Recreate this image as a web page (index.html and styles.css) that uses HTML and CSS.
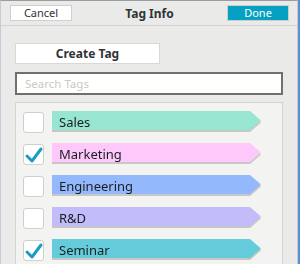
FILE: index.html
```html
<!DOCTYPE html>
<html>
<head>
    <meta charset="UTF-8">
    <title>Tag Info</title>
    <link rel="stylesheet" href="styles.css">
</head>
<body>
    <div class="window">
        <div class="header">
            <button class="header-button cancel">Cancel</button>
            <div class="title">Tag Info</div>
            <button class="header-button done">Done</button>
        </div>
        <div class="container">
            <button class="create-button">Create Tag</button>
            <input type="text" class="search-input" placeholder="Search Tags">
            <div class="tag-list">
                <div class="tag-row">
                    <span class="check-box"></span>
                    <span class="tag-wrap"><span class="tag tag-sales">Sales</span></span>
                </div>
                <div class="tag-row">
                    <span class="check-box checked">
                        <svg width="21" height="21" viewBox="0 0 21 21"><path d="M4 12 L9 17 L18 5" fill="none" stroke="#1b9dbf" stroke-width="3" stroke-linecap="round" stroke-linejoin="round"/></svg>
                    </span>
                    <span class="tag-wrap"><span class="tag tag-marketing">Marketing</span></span>
                </div>
                <div class="tag-row">
                    <span class="check-box"></span>
                    <span class="tag-wrap"><span class="tag tag-engineering">Engineering</span></span>
                </div>
                <div class="tag-row">
                    <span class="check-box"></span>
                    <span class="tag-wrap"><span class="tag tag-rnd">R&amp;D</span></span>
                </div>
                <div class="tag-row">
                    <span class="check-box checked">
                        <svg width="21" height="21" viewBox="0 0 21 21"><path d="M4 12 L9 17 L18 5" fill="none" stroke="#1b9dbf" stroke-width="3" stroke-linecap="round" stroke-linejoin="round"/></svg>
                    </span>
                    <span class="tag-wrap"><span class="tag tag-seminar">Seminar</span></span>
                </div>
            </div>
        </div>
    </div>
</body>
</html>
```

FILE: styles.css
```css
html, body {
    margin: 0;
    height: 264px;
    overflow: hidden;
}

body {
    background: #5a8ed6;
    font-family: "Noto Sans", "Open Sans", sans-serif;
    color: #333;
}

.window {
    width: 298px;
    height: 264px;
    background: #eaebe9;
    border-left: 1px solid #c5cad9;
    border-right: 1px solid #cbccca;
    border-top: 1px solid #9a9c9e;
    box-sizing: border-box;
}

.header {
    display: flex;
    align-items: center;
    justify-content: space-between;
    height: 24px;
    padding: 0 8px 0 9px;
    border-bottom: 1px solid #d2d3d1;
}

.header-button {
    height: 16px;
    padding: 0;
    font-family: inherit;
    font-size: 11px;
    line-height: 14px;
    border: 1px solid #cfd0ce;
    box-sizing: border-box;
}

.cancel {
    width: 62px;
    background: #fff;
    color: #333;
}

.done {
    width: 62px;
    background: #06a0c2;
    color: #fff;
    border-color: #c7cfd2;
}

.title {
    font-size: 12px;
    font-weight: 700;
    color: #2f3437;
    margin-top: 1px;
}

.container {
    padding: 17px 0 0 14px;
}

.create-button {
    display: block;
    width: 145px;
    height: 21px;
    padding: 0;
    background: #fff;
    border: 1px solid #d8d9d7;
    font-family: inherit;
    font-size: 12px;
    font-weight: 700;
    color: #2f3437;
}

.search-input {
    display: block;
    width: 268px;
    height: 23px;
    margin-top: 8px;
    padding: 0 8px;
    border: 2px solid #6f7170;
    background: #fffffd;
    box-sizing: border-box;
    font-family: inherit;
    font-size: 11.5px;
    outline: none;
}

.search-input::placeholder {
    color: #c9cac8;
}

.tag-list {
    width: 268px;
    height: 162px;
    margin-top: 7px;
    padding: 8px 0 0 7px;
    box-sizing: border-box;
    background: #f3f4f1;
    border: 1px solid #d3d4d2;
    border-bottom: none;
    overflow: hidden;
}

.tag-row {
    display: flex;
    align-items: flex-start;
    gap: 8px;
    height: 32px;
}

.check-box {
    width: 21px;
    height: 21px;
    margin-top: 1px;
    background: #fff;
    border: 1px solid #cfd0ce;
    border-radius: 3px;
    box-sizing: border-box;
    position: relative;
}

.check-box svg {
    position: absolute;
    left: -1px;
    top: -1px;
}

.tag-wrap {
    filter: drop-shadow(0 2px 0 rgba(0, 0, 0, 0.18));
}

.tag {
    display: block;
    width: 210px;
    height: 19px;
    padding: 3px 0 0 7px;
    box-sizing: border-box;
    font-size: 13px;
    line-height: 17px;
    color: #1a1d20;
    clip-path: polygon(0 0, 198px 0, 209px 50%, 198px 100%, 0 100%);
}

.tag-sales { background: #98e6d2; }
.tag-marketing { background: #ffc8fa; }
.tag-engineering { background: #93b8fb; }
.tag-rnd { background: #c3bcfb; }
.tag-seminar { background: #65ccdb; }
```
